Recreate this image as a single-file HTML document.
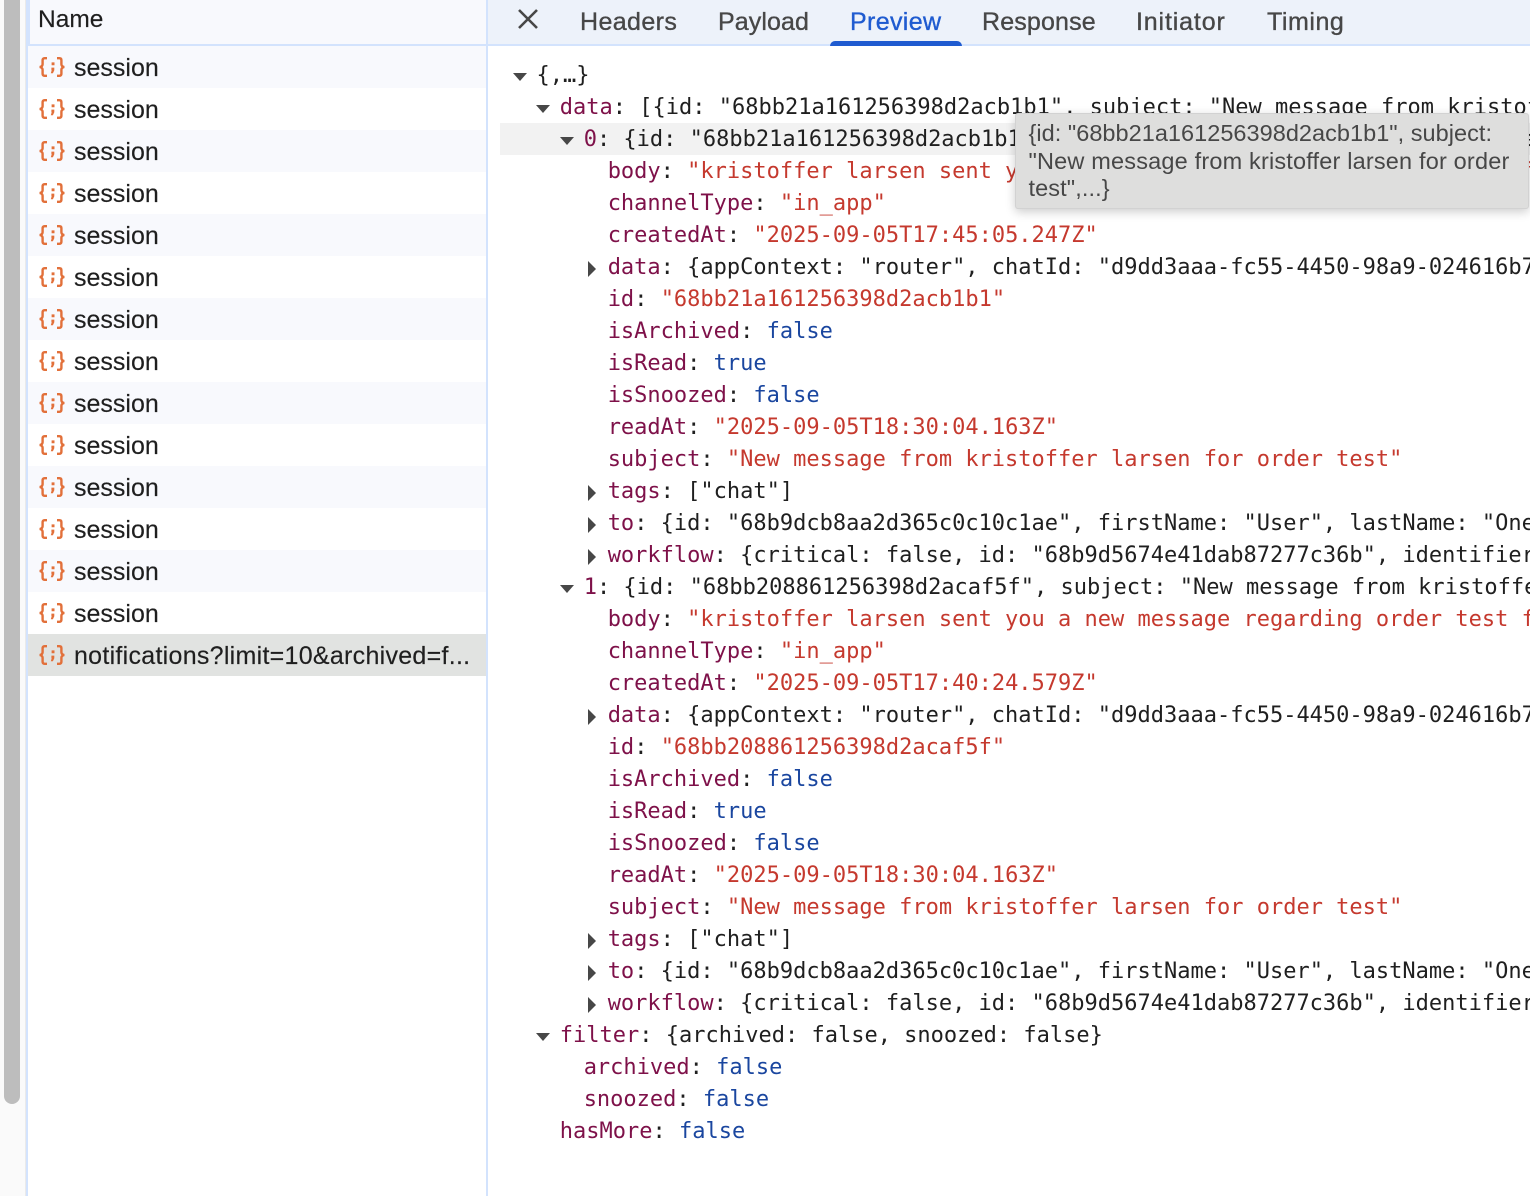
<!DOCTYPE html>
<html><head><meta charset="utf-8"><style>
html,body{margin:0;padding:0;background:#fff}
#p{position:relative;width:1530px;height:1196px;overflow:hidden;background:#fff;font-family:"Liberation Sans",sans-serif}
.a{position:absolute}
.r{position:absolute;left:28px;width:458px;height:42px;font-size:25px;line-height:42px;color:#1f1f1f;-webkit-text-stroke:.15px #1f1f1f}
.r span{position:absolute;left:46px;top:1px;white-space:nowrap}
.r svg{position:absolute;left:11px;top:11px}
.s{background:#f8f9fd}
.t{position:absolute;top:0;height:44px;line-height:44px;font-size:25px;color:#474747;-webkit-text-stroke:.35px #474747;white-space:nowrap}
#j{position:absolute;left:0;top:60px;width:1530px;font:22px/32px "DejaVu Sans Mono","Liberation Mono",monospace;color:#1f1f1f}
#j div{height:32px;white-space:pre;position:relative}
.i0{padding-left:536.5px}.i1{padding-left:559.8px}.i2{padding-left:583.7px}.i3{padding-left:607.7px}
k{color:#7e1149}q{color:#c5392e;quotes:none}q:before,q:after{content:""}b{color:#1a469f;font-weight:normal}
.d,.g{position:absolute;width:0;height:0}
.d{top:13px;margin-left:-24px;border-left:7.5px solid transparent;border-right:7.5px solid transparent;border-top:8px solid #474747}
.g{top:9px;margin-left:-20px;border-top:8px solid transparent;border-bottom:8px solid transparent;border-left:8px solid #474747}
</style></head><body><div id="p">
<svg width="0" height="0" style="position:absolute"><defs><symbol id="ic" viewBox="0 0 26 20"><path d="M8 1.2H5.6Q3.6 1.2 3.6 3.2V7.2Q3.6 9.3 .8 10Q3.6 10.7 3.6 12.8V16.8Q3.6 18.8 5.6 18.8H8M18 1.2H20.4Q22.4 1.2 22.4 3.2V7.2Q22.4 9.3 25.2 10Q22.4 10.7 22.4 12.8V16.8Q22.4 18.8 20.4 18.8H18" fill="none" stroke="#e2703a" stroke-width="2.4"/><path d="M12.6 5.4h2.9v2.9h-2.9zM12.4 10.6h2.9v2.6l-1.4 3h-2.1l.9-3h-.3z" fill="#e2703a"/></symbol></defs></svg>

<div class="a" style="left:0;top:0;width:26px;height:1196px;background:#fafafa"></div>
<div class="a" style="left:4px;top:-10px;width:16px;height:1114px;background:#bdbdbd;border-radius:0 0 8px 8px"></div>
<div class="a" style="left:25px;top:0;width:1px;height:1196px;background:#eaeaea"></div>
<div class="a" style="left:26px;top:0;width:2px;height:1196px;background:#d3e3fd"></div>

<div class="a" style="left:28px;top:0;width:458px;height:44px;background:#f8f9fd"></div>
<div class="a" style="left:28px;top:0;width:2px;height:44px;background:#d3e3fd"></div>
<div class="a" style="left:28px;top:44px;width:458px;height:2px;background:#d3e3fd"></div>
<div class="a" style="left:38px;top:0;line-height:40px;font-size:24.5px;color:#1f1f1f;-webkit-text-stroke:.15px #1f1f1f">Name</div>

<div class="r s" style="top:46px"><svg width="26" height="20"><use href="#ic"/></svg><span>session</span></div>
<div class="r" style="top:88px"><svg width="26" height="20"><use href="#ic"/></svg><span>session</span></div>
<div class="r s" style="top:130px"><svg width="26" height="20"><use href="#ic"/></svg><span>session</span></div>
<div class="r" style="top:172px"><svg width="26" height="20"><use href="#ic"/></svg><span>session</span></div>
<div class="r s" style="top:214px"><svg width="26" height="20"><use href="#ic"/></svg><span>session</span></div>
<div class="r" style="top:256px"><svg width="26" height="20"><use href="#ic"/></svg><span>session</span></div>
<div class="r s" style="top:298px"><svg width="26" height="20"><use href="#ic"/></svg><span>session</span></div>
<div class="r" style="top:340px"><svg width="26" height="20"><use href="#ic"/></svg><span>session</span></div>
<div class="r s" style="top:382px"><svg width="26" height="20"><use href="#ic"/></svg><span>session</span></div>
<div class="r" style="top:424px"><svg width="26" height="20"><use href="#ic"/></svg><span>session</span></div>
<div class="r s" style="top:466px"><svg width="26" height="20"><use href="#ic"/></svg><span>session</span></div>
<div class="r" style="top:508px"><svg width="26" height="20"><use href="#ic"/></svg><span>session</span></div>
<div class="r s" style="top:550px"><svg width="26" height="20"><use href="#ic"/></svg><span>session</span></div>
<div class="r" style="top:592px"><svg width="26" height="20"><use href="#ic"/></svg><span>session</span></div>
<div class="r" style="top:634px;background:#e1e3e1"><svg width="26" height="20"><use href="#ic"/></svg><span style="letter-spacing:.28px">notifications?limit=10&amp;archived=f...</span></div>

<div class="a" style="left:486px;top:0;width:2px;height:1196px;background:#d3e3fd"></div>

<div class="a" style="left:488px;top:0;width:1042px;height:44px;background:#edf2fa"></div>
<div class="a" style="left:488px;top:44px;width:1042px;height:2px;background:#d3e3fd"></div>
<svg class="a" style="left:516px;top:7px" width="24" height="24"><path d="M3 3L21 21M21 3L3 21" stroke="#474747" stroke-width="2.6" fill="none"/></svg>
<div class="t" style="left:580px;letter-spacing:.4px">Headers</div>
<div class="t" style="left:718px;letter-spacing:.1px">Payload</div>
<div class="t" style="left:850px;letter-spacing:.35px;color:#1f5bd0;-webkit-text-stroke-color:#1f5bd0">Preview</div>
<div class="t" style="left:982px;letter-spacing:.15px">Response</div>
<div class="t" style="left:1136px;letter-spacing:.85px">Initiator</div>
<div class="t" style="left:1267px;letter-spacing:.55px">Timing</div>
<div class="a" style="left:830px;top:41px;width:132px;height:5px;background:#1f5bd0;border-radius:5px 5px 0 0"></div>

<div class="a" style="left:500px;top:123px;width:1030px;height:32px;background:#f2f2f2"></div>

<div id="j">
<div class="i0"><i class="d"></i>{,…}</div>
<div class="i1"><i class="d"></i><k>data</k>: [{id: "68bb21a161256398d2acb1b1", subject: "New message from kristoffer larsen for order test",…},…]</div>
<div class="i2"><i class="d"></i><k>0</k>: {id: "68bb21a161256398d2acb1b1", subject: "New message from kristoffer larsen for order test",…}</div>
<div class="i3"><k>body</k>: <q>"kristoffer larsen sent you a new message regarding order test for the router"</q></div>
<div class="i3"><k>channelType</k>: <q>"in_app"</q></div>
<div class="i3"><k>createdAt</k>: <q>"2025-09-05T17:45:05.247Z"</q></div>
<div class="i3"><i class="g"></i><k>data</k>: {appContext: "router", chatId: "d9dd3aaa-fc55-4450-98a9-024616b7"}</div>
<div class="i3"><k>id</k>: <q>"68bb21a161256398d2acb1b1"</q></div>
<div class="i3"><k>isArchived</k>: <b>false</b></div>
<div class="i3"><k>isRead</k>: <b>true</b></div>
<div class="i3"><k>isSnoozed</k>: <b>false</b></div>
<div class="i3"><k>readAt</k>: <q>"2025-09-05T18:30:04.163Z"</q></div>
<div class="i3"><k>subject</k>: <q>"New message from kristoffer larsen for order test"</q></div>
<div class="i3"><i class="g"></i><k>tags</k>: ["chat"]</div>
<div class="i3"><i class="g"></i><k>to</k>: {id: "68b9dcb8aa2d365c0c10c1ae", firstName: "User", lastName: "One"}</div>
<div class="i3"><i class="g"></i><k>workflow</k>: {critical: false, id: "68b9d5674e41dab87277c36b", identifier: "chat"}</div>
<div class="i2"><i class="d"></i><k>1</k>: {id: "68bb208861256398d2acaf5f", subject: "New message from kristoffer larsen for order test",…}</div>
<div class="i3"><k>body</k>: <q>"kristoffer larsen sent you a new message regarding order test for the router"</q></div>
<div class="i3"><k>channelType</k>: <q>"in_app"</q></div>
<div class="i3"><k>createdAt</k>: <q>"2025-09-05T17:40:24.579Z"</q></div>
<div class="i3"><i class="g"></i><k>data</k>: {appContext: "router", chatId: "d9dd3aaa-fc55-4450-98a9-024616b7"}</div>
<div class="i3"><k>id</k>: <q>"68bb208861256398d2acaf5f"</q></div>
<div class="i3"><k>isArchived</k>: <b>false</b></div>
<div class="i3"><k>isRead</k>: <b>true</b></div>
<div class="i3"><k>isSnoozed</k>: <b>false</b></div>
<div class="i3"><k>readAt</k>: <q>"2025-09-05T18:30:04.163Z"</q></div>
<div class="i3"><k>subject</k>: <q>"New message from kristoffer larsen for order test"</q></div>
<div class="i3"><i class="g"></i><k>tags</k>: ["chat"]</div>
<div class="i3"><i class="g"></i><k>to</k>: {id: "68b9dcb8aa2d365c0c10c1ae", firstName: "User", lastName: "One"}</div>
<div class="i3"><i class="g"></i><k>workflow</k>: {critical: false, id: "68b9d5674e41dab87277c36b", identifier: "chat"}</div>
<div class="i1"><i class="d"></i><k>filter</k>: {archived: false, snoozed: false}</div>
<div class="i2"><k>archived</k>: <b>false</b></div>
<div class="i2"><k>snoozed</k>: <b>false</b></div>
<div class="i1"><k>hasMore</k>: <b>false</b></div>
</div>

<div class="a" style="left:1015px;top:113px;background:#dededd;border:1px solid #d2d2d2;border-radius:3px;box-shadow:0 3px 10px rgba(0,0,0,.2);width:512px;height:94px;font-size:23.5px;line-height:28px;color:#474747">
<div class="a" style="left:12.5px;top:5px;white-space:nowrap;letter-spacing:.03px">{id: "68bb21a161256398d2acb1b1", subject:</div>
<div class="a" style="left:12.5px;top:33px;white-space:nowrap;letter-spacing:.18px">"New message from kristoffer larsen for order</div>
<div class="a" style="left:12.5px;top:60px;white-space:nowrap;letter-spacing:.1px">test",...}</div>
</div>
</div></body></html>
